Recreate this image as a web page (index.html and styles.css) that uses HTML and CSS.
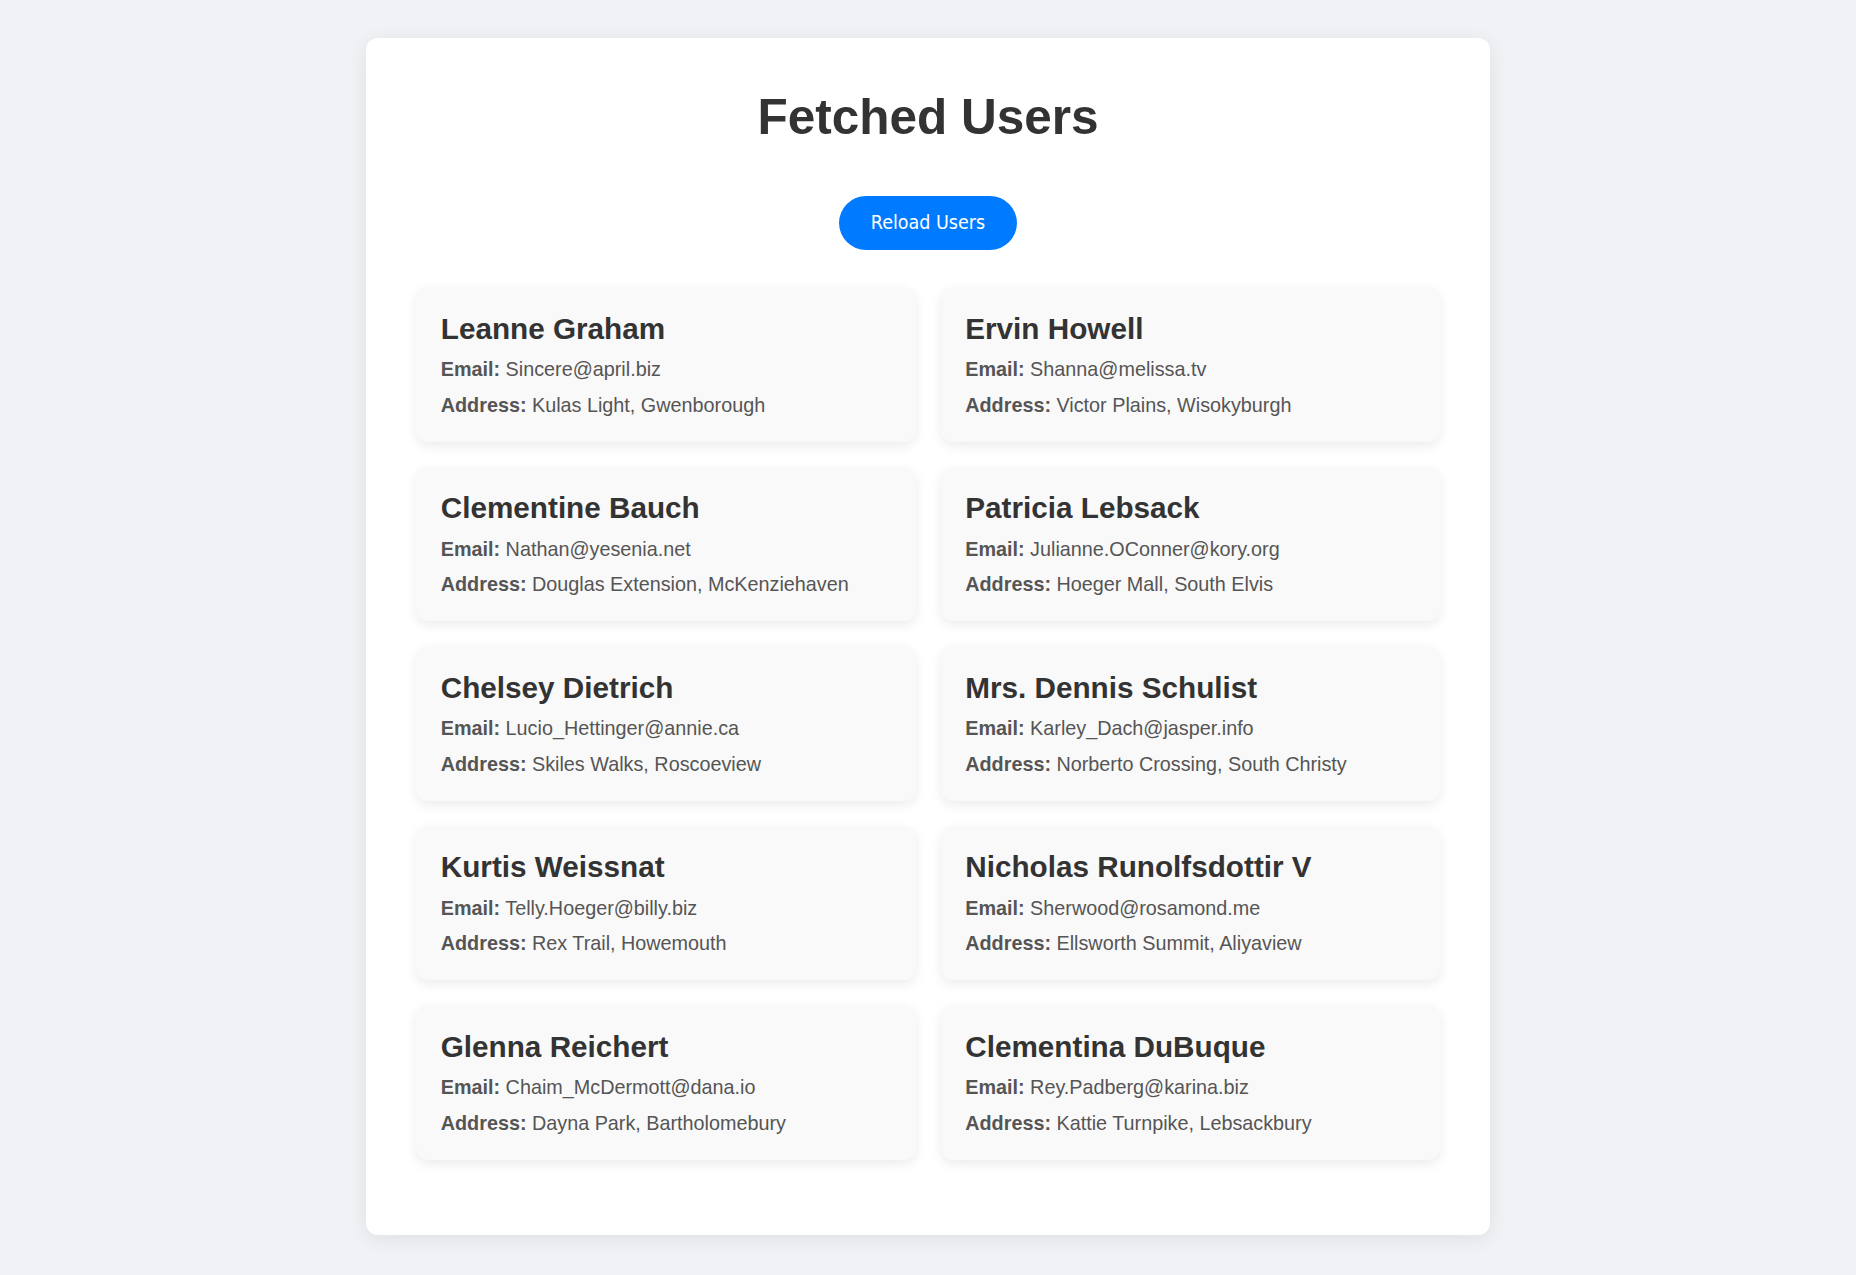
FILE: index.html
```html
<!DOCTYPE html>
<html lang="en">
<head>
<meta charset="utf-8">
<title>Fetched Users</title>
<link rel="stylesheet" href="styles.css">
</head>
<body>
<main class="container">
  <h1 class="title">Fetched Users</h1>
  <div class="actions">
    <button class="reload-btn" type="button">Reload Users</button>
  </div>
  <div class="user-grid">
    <div class="user-card">
      <h3 class="user-name">Leanne Graham</h3>
      <p class="user-line"><strong>Email:</strong> Sincere@april.biz</p>
      <p class="user-line"><strong>Address:</strong> Kulas Light, Gwenborough</p>
    </div>
    <div class="user-card">
      <h3 class="user-name">Ervin Howell</h3>
      <p class="user-line"><strong>Email:</strong> Shanna@melissa.tv</p>
      <p class="user-line"><strong>Address:</strong> Victor Plains, Wisokyburgh</p>
    </div>
    <div class="user-card">
      <h3 class="user-name">Clementine Bauch</h3>
      <p class="user-line"><strong>Email:</strong> Nathan@yesenia.net</p>
      <p class="user-line"><strong>Address:</strong> Douglas Extension, McKenziehaven</p>
    </div>
    <div class="user-card">
      <h3 class="user-name">Patricia Lebsack</h3>
      <p class="user-line"><strong>Email:</strong> Julianne.OConner@kory.org</p>
      <p class="user-line"><strong>Address:</strong> Hoeger Mall, South Elvis</p>
    </div>
    <div class="user-card">
      <h3 class="user-name">Chelsey Dietrich</h3>
      <p class="user-line"><strong>Email:</strong> Lucio_Hettinger@annie.ca</p>
      <p class="user-line"><strong>Address:</strong> Skiles Walks, Roscoeview</p>
    </div>
    <div class="user-card">
      <h3 class="user-name">Mrs. Dennis Schulist</h3>
      <p class="user-line"><strong>Email:</strong> Karley_Dach@jasper.info</p>
      <p class="user-line"><strong>Address:</strong> Norberto Crossing, South Christy</p>
    </div>
    <div class="user-card">
      <h3 class="user-name">Kurtis Weissnat</h3>
      <p class="user-line"><strong>Email:</strong> Telly.Hoeger@billy.biz</p>
      <p class="user-line"><strong>Address:</strong> Rex Trail, Howemouth</p>
    </div>
    <div class="user-card">
      <h3 class="user-name">Nicholas Runolfsdottir V</h3>
      <p class="user-line"><strong>Email:</strong> Sherwood@rosamond.me</p>
      <p class="user-line"><strong>Address:</strong> Ellsworth Summit, Aliyaview</p>
    </div>
    <div class="user-card">
      <h3 class="user-name">Glenna Reichert</h3>
      <p class="user-line"><strong>Email:</strong> Chaim_McDermott@dana.io</p>
      <p class="user-line"><strong>Address:</strong> Dayna Park, Bartholomebury</p>
    </div>
    <div class="user-card">
      <h3 class="user-name">Clementina DuBuque</h3>
      <p class="user-line"><strong>Email:</strong> Rey.Padberg@karina.biz</p>
      <p class="user-line"><strong>Address:</strong> Kattie Turnpike, Lebsackbury</p>
    </div>
  </div>
</main>
</body>
</html>
```
FILE: styles.css
```css
* {
  box-sizing: border-box;
}

html, body {
  margin: 0;
}

body {
  background: #f0f2f5;
  font-family: "Liberation Sans", Arial, sans-serif;
  padding: 38px 0;
}

.container {
  width: 1124px;
  margin: 0 auto;
  padding: 50px 50px 75.5px;
  background: #ffffff;
  border-radius: 12px;
  box-shadow: 0 4px 20px rgba(0, 0, 0, 0.08);
}

.title {
  margin: 0 0 50.5px;
  font-size: 49.5px;
  font-weight: bold;
  color: #333333;
  text-align: center;
  line-height: normal;
}

.actions {
  display: flex;
  justify-content: center;
  margin-bottom: 37.5px;
}

.reload-btn {
  font-family: "DejaVu Sans Condensed", "DejaVu Sans", sans-serif;
  font-stretch: condensed;
  font-size: 19.5px;
  line-height: 22px;
  padding: 16px 31.5px;
  border: none;
  border-radius: 27px;
  background: #007bff;
  color: #ffffff;
  cursor: pointer;
}

.user-grid {
  display: grid;
  grid-template-columns: 1fr 1fr;
  gap: 25px;
}

.user-card {
  display: flex;
  flex-direction: column;
  gap: 12.5px;
  padding: 24.75px;
  background: #f9f9f9;
  border-radius: 12px;
  box-shadow: 0 4px 12px rgba(0, 0, 0, 0.08);
}

.user-name {
  margin: 0;
  font-size: 29.7px;
  font-weight: bold;
  color: #333333;
  line-height: normal;
}

.user-line {
  margin: 0;
  font-size: 19.8px;
  color: #555555;
  line-height: normal;
}

.user-line strong {
  color: #555555;
}
```
